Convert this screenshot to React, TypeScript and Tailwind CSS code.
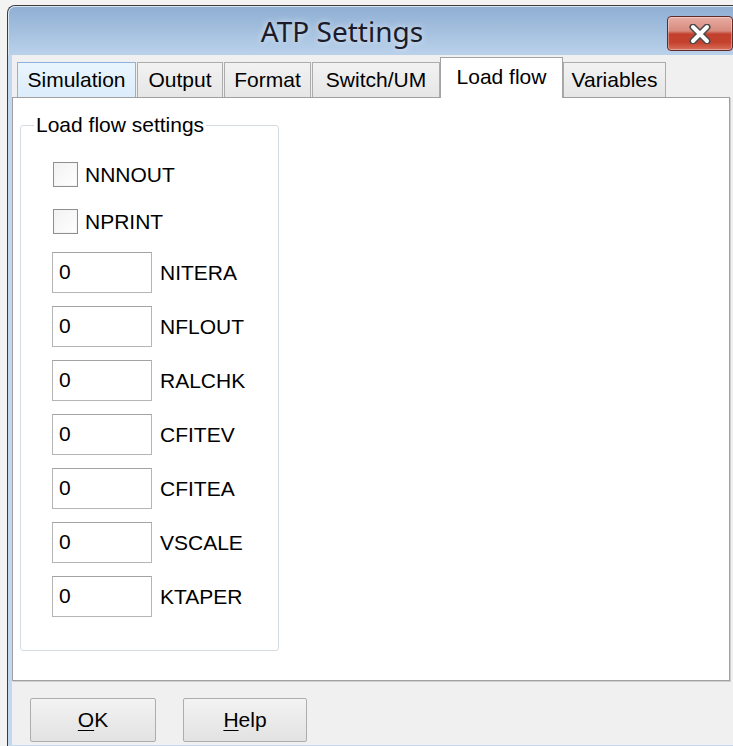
import React from "react";

type Field = { value: string; name: string };

const fields: Field[] = [
  { value: "0", name: "NITERA" },
  { value: "0", name: "NFLOUT" },
  { value: "0", name: "RALCHK" },
  { value: "0", name: "CFITEV" },
  { value: "0", name: "CFITEA" },
  { value: "0", name: "VSCALE" },
  { value: "0", name: "KTAPER" },
];

function CloseGlyph() {
  return (
    <svg width="26" height="20" viewBox="0 0 26 20">
      <path d="M6 3 L20 17 M20 3 L6 17" stroke="#4a4a4a" strokeWidth="7" strokeLinecap="round" />
      <path d="M6 3 L20 17 M20 3 L6 17" stroke="#ffffff" strokeWidth="4" strokeLinecap="round" />
    </svg>
  );
}

function Tab({ label, width, state }: { label: string; width: string; state: "normal" | "hot" | "active" }) {
  if (state === "active") {
    return (
      <div
        className={`relative z-10 -mb-px flex h-[41px] ${width} items-center justify-center border border-b-0 border-[#a3a3a3] bg-white pb-[2px]`}
      >
        {label}
      </div>
    );
  }
  const skin =
    state === "hot"
      ? "border-[#8db2dc] bg-gradient-to-b from-[#eaf5fd] to-[#dcecfb]"
      : "border-[#acacac] bg-gradient-to-b from-[#f2f2f2] to-[#e6e6e6]";
  return (
    <div className={`flex h-[35px] ${width} items-center justify-center border border-b-0 ${skin}`}>
      {label}
    </div>
  );
}

function CheckRow({ label }: { label: string }) {
  return (
    <div className="flex h-[25px] items-center">
      <div className="ml-[1px] h-[25px] w-[25px] border border-[#8e8f8f] bg-gradient-to-br from-[#f2f2f2] to-white shadow-[inset_0_0_0_1px_#f4f4f4]" />
      <span className="ml-[7px]">{label}</span>
    </div>
  );
}

function FieldRow({ value, name }: Field) {
  return (
    <div className="flex h-[41px] items-center">
      <div className="flex h-[41px] w-[100px] items-center border border-[#b5b5b5] border-t-[#a3a3a3] bg-white pb-[2px] pl-[6px]">
        {value}
      </div>
      <span className="ml-[8px]">{name}</span>
    </div>
  );
}

function DialogButton({ mnemonic, rest, width }: { mnemonic: string; rest: string; width: string }) {
  return (
    <div
      className={`flex h-[44px] ${width} items-center justify-center rounded-[2px] border border-[#adadad] bg-gradient-to-b from-[#f3f3f3] to-[#e2e2e2]`}
    >
      <span>
        <span className="underline decoration-1 underline-offset-[3px]">{mnemonic}</span>
        {rest}
      </span>
    </div>
  );
}

export default function App() {
  return (
    <div className="h-[746px] w-[733px] overflow-hidden bg-[#f3f3f3] pl-[7px] pt-[5px] font-['Liberation_Sans',Arial,sans-serif] text-[21px] text-black">
      <div className="flex h-[760px] w-[780px] flex-col overflow-hidden rounded-tl-[8px] border-l border-t border-[#3c3c3c] bg-[#c3d7ee]">
        {/* caption bar */}
        <div className="flex h-[49px] shrink-0 items-start rounded-tl-[7px] border-l border-t border-[#dbe6f3] bg-gradient-to-b from-[#8fafd4] to-[#bad1ea]">
          <div className="flex h-full w-[658px] items-center justify-center pb-[1px] pl-[8px] font-['Noto_Sans',sans-serif] text-[28px] text-[#1b1b2a] [text-shadow:0_0_6px_rgba(255,255,255,0.75)]">
            ATP Settings
          </div>
          <div className="mt-[9px] flex h-[35px] w-[66px] items-center justify-center rounded-[4px] border border-[#5e2a2a] bg-[linear-gradient(to_bottom,#e8ada3_0%,#d88a7e_42%,#c23f2c_52%,#c4432f_78%,#d8705d_100%)] shadow-[inset_0_0_0_1px_rgba(255,255,255,0.35)]">
            <CloseGlyph />
          </div>
        </div>

        {/* window body: 4px frame on the left, then client area */}
        <div className="flex pl-[4px]">
          <div className="flex h-[690px] flex-1 flex-col bg-[#f0f0f0]">
            {/* tab strip */}
            <div className="flex h-[42px] shrink-0 items-end pl-[5px]">
              <Tab label="Simulation" width="w-[119px]" state="hot" />
              <div className="ml-[1px]">
                <Tab label="Output" width="w-[86px]" state="normal" />
              </div>
              <div className="ml-[1px]">
                <Tab label="Format" width="w-[87px]" state="normal" />
              </div>
              <div className="ml-[1px]">
                <Tab label="Switch/UM" width="w-[128px]" state="normal" />
              </div>
              <Tab label="Load flow" width="w-[123px]" state="active" />
              <Tab label="Variables" width="w-[103px]" state="normal" />
            </div>

            {/* tab page */}
            <div className="h-[584px] w-[718px] shrink-0 border border-[#a0a0a0] bg-white pl-[7px] pt-[15px] shadow-[1px_1px_0_#cfcfcf]">
              <fieldset className="w-[259px] rounded-[3px] border border-[#d5dde3] pb-[33px] pl-[31px]">
                <legend className="-ml-[18px] px-[2px] leading-[24px]">Load flow settings</legend>
                <div className="flex flex-col pt-[25px]">
                  <CheckRow label="NNNOUT" />
                  <div className="mt-[22px]">
                    <CheckRow label="NPRINT" />
                  </div>
                  <div className="mt-[18px] flex flex-col gap-[13px]">
                    {fields.map((f) => (
                      <FieldRow key={f.name} value={f.value} name={f.name} />
                    ))}
                  </div>
                </div>
              </fieldset>
            </div>

            {/* buttons */}
            <div className="flex gap-[27px] pl-[18px] pt-[17px]">
              <DialogButton mnemonic="O" rest="K" width="w-[126px]" />
              <DialogButton mnemonic="H" rest="elp" width="w-[124px]" />
            </div>
          </div>
        </div>
      </div>
    </div>
  );
}
